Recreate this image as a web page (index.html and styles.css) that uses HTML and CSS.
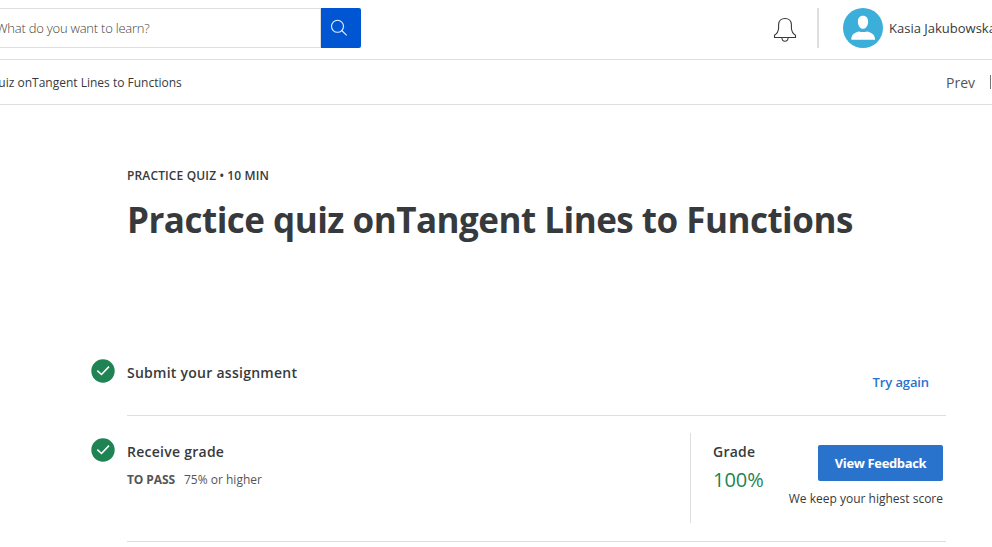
FILE: index.html
```html
<!DOCTYPE html>
<html lang="en">
<head>
<meta charset="utf-8">
<title>Practice quiz</title>
<link rel="stylesheet" href="styles.css">
</head>
<body>
<header class="topbar">
  <div class="search">
    <div class="search-field"><span class="search-hint">What do you want to learn?</span></div>
    <button class="search-button" aria-label="Search">
      <svg width="18" height="18" viewBox="0 0 18 18" fill="none" stroke="#fff" stroke-opacity=".9" stroke-width="1.1"><circle cx="7.5" cy="7.3" r="6"/><path d="M11.7 11.500L16.700 16.300"/></svg>
    </button>
  </div>
  <div class="account">
    <svg class="bell" width="24" height="26" viewBox="0 0 24 26" fill="none" stroke="#373a3c" stroke-width="1.1"><path d="M1.5 20.5V18.2Q5.4 16 5.6 11V7.5C5.9 3.5 8.8 1.5 12 1.5S18.1 3.5 18.4 7.5V11Q18.6 16 22.5 18.2V20.5ZM8.8 20.5C9.2 25.5 14.8 25.5 15.2 20.5"/></svg>
    <span class="separator"></span>
    <svg class="avatar" width="40" height="40" viewBox="0 0 40 40"><circle cx="20" cy="20" r="20" fill="#3bafda"/><path fill="#fff" d="M20 7.7c3.3 0 5.1 2.4 5.1 5.7 0 3.8-2 7.4-5.1 7.4s-5.1-3.6-5.1-7.4c0-3.3 1.800-5.700 5.100-5.700ZM8.300 31.800c.2-5.600 2.200-6.800 7.600-8.400q4.100 1.400 8.200 0c5.400 1.600 7.700 2.800 8 8.400Z"/></svg>
    <span class="user">Kasia Jakubowska</span>
  </div>
</header>
<nav class="crumbs">
  <span class="crumb">Quiz onTangent Lines to Functions</span>
  <div class="pager"><span class="prev">Prev</span><span class="pager-line"></span></div>
</nav>
<main class="content">
  <div class="kicker">PRACTICE QUIZ • 10 MIN</div>
  <h1 class="title">Practice quiz onTangent Lines to Functions</h1>
  <section class="step submit">
    <svg class="check" width="24" height="24" viewBox="0 0 24 24"><circle cx="12" cy="12" r="11.700" fill="#1f8354"/><path d="M6.300 11.600L10.500 15.500L18 7.600" fill="none" stroke="#fff" stroke-width="1.600"/></svg>
    <h2 class="step-title">Submit your assignment</h2>
    <a class="retry">Try again</a>
  </section>
  <section class="step grade">
    <svg class="check" width="24" height="24" viewBox="0 0 24 24"><circle cx="12" cy="12" r="11.700" fill="#1f8354"/><path d="M6.300 11.600L10.500 15.500L18 7.600" fill="none" stroke="#fff" stroke-width="1.600"/></svg>
    <div class="receive">
      <h2 class="step-title">Receive grade</h2>
      <p class="pass"><b>TO PASS</b><span class="threshold">75% or higher</span></p>
    </div>
    <div class="result">
      <div class="score"><h2 class="step-title">Grade</h2><div class="percent">100%</div></div>
      <div class="feedback"><button class="feedback-button">View Feedback</button><span class="note">We keep your highest score</span></div>
    </div>
  </section>
</main>
</body>
</html>
```
FILE: styles.css
```css
* { box-sizing: border-box; }
body { margin: 0; height: 547px; overflow: hidden; background: #fff; color: #373a3c; font-family: "Open Sans", sans-serif; font-size: 13px; }
h1, h2, p { margin: 0; }
span, a, h1, h2, button, .kicker { white-space: nowrap; }
button { border: 0; padding: 0; font-family: inherit; }
svg { display: block; flex: none; }
.topbar { height: 60px; border-bottom: 1px solid #dedede; display: flex; justify-content: space-between; padding-top: 8px; }
.search { display: flex; width: 361px; height: 40px; }
.search-field { flex: 1; border: solid #dedede; border-width: 1px 1px 1px 0; line-height: 38px; }
.search-hint { margin-left: -4px; font-weight: 300; color: #444; letter-spacing: -0.23px; }
.search-button { width: 40px; background: #0056d2; border-radius: 0 2px 2px 0; padding-left: 9px; }
.account { display: flex; width: 219px; height: 40px; }
.bell { margin-top: 9px; }
.separator { flex: none; width: 2px; background: #dedede; margin-left: 20px; }
.avatar { margin-left: 24px; }
.user { margin-left: 6px; line-height: 40px; }
.crumbs { height: 45px; border-bottom: 1px solid #dedede; display: flex; justify-content: space-between; line-height: 45px; }
.crumb { margin-left: -11px; font-size: 12px; }
.pager { display: flex; width: 46px; align-items: center; justify-content: space-between; }
.prev { font-size: 14px; color: #555; }
.pager-line { width: 2px; height: 14px; background: linear-gradient(90deg, #757575 50%, #fff 50%); }
.content { width: 819px; margin-left: 127px; padding-top: 60px; }
.kicker { height: 20px; line-height: 20px; margin-top: 1px; font-size: 12px; font-weight: 600; letter-spacing: 0.14px; }
.title { height: 50px; line-height: 50px; margin-top: 9px; font-size: 35px; font-weight: 700; letter-spacing: -0.51px; }
.step { display: flex; border-bottom: 1px solid #dedede; margin-left: -36px; position: relative; }
.step::before { content: ""; position: absolute; left: 0; bottom: -1px; width: 36px; height: 1px; background: #fff; }
.submit { height: 73px; margin-top: 98px; }
.check { margin: 16px 12px 0 0; }
.step-title { font-size: 14px; font-weight: 600; line-height: 20px; letter-spacing: 0.26px; }
.submit .step-title { margin-top: 20px; }
.retry { margin: 29px 17px 0 auto; line-height: 20px; color: #2a73cc; font-weight: 600; letter-spacing: -0.12px; }
.grade { height: 126px; }
.grade .check { margin-top: 22px; }
.receive { padding-top: 26px; flex: 1; }
.pass { display: flex; font-size: 12px; line-height: 20px; margin-top: 8px; color: #555; }
.pass b { font-weight: 700; width: 57px; letter-spacing: -0.1px; }
.result { display: flex; width: 256px; height: 90px; margin-top: 17px; border-left: 1px solid #dedede; padding: 9px 3px 0 22px; justify-content: space-between; }
.percent { color: #1f8354; font-size: 20px; line-height: 30px; margin-top: 3px; }
.feedback { display: flex; flex-direction: column; align-items: flex-end; padding-top: 3px; }
.feedback-button { width: 125px; height: 36px; background: #2a73cc; color: #fff; border-radius: 2px; font-size: 13px; font-weight: 700; letter-spacing: -0.35px; }
.note { font-size: 12px; line-height: 20px; margin-top: 8px; }
```
